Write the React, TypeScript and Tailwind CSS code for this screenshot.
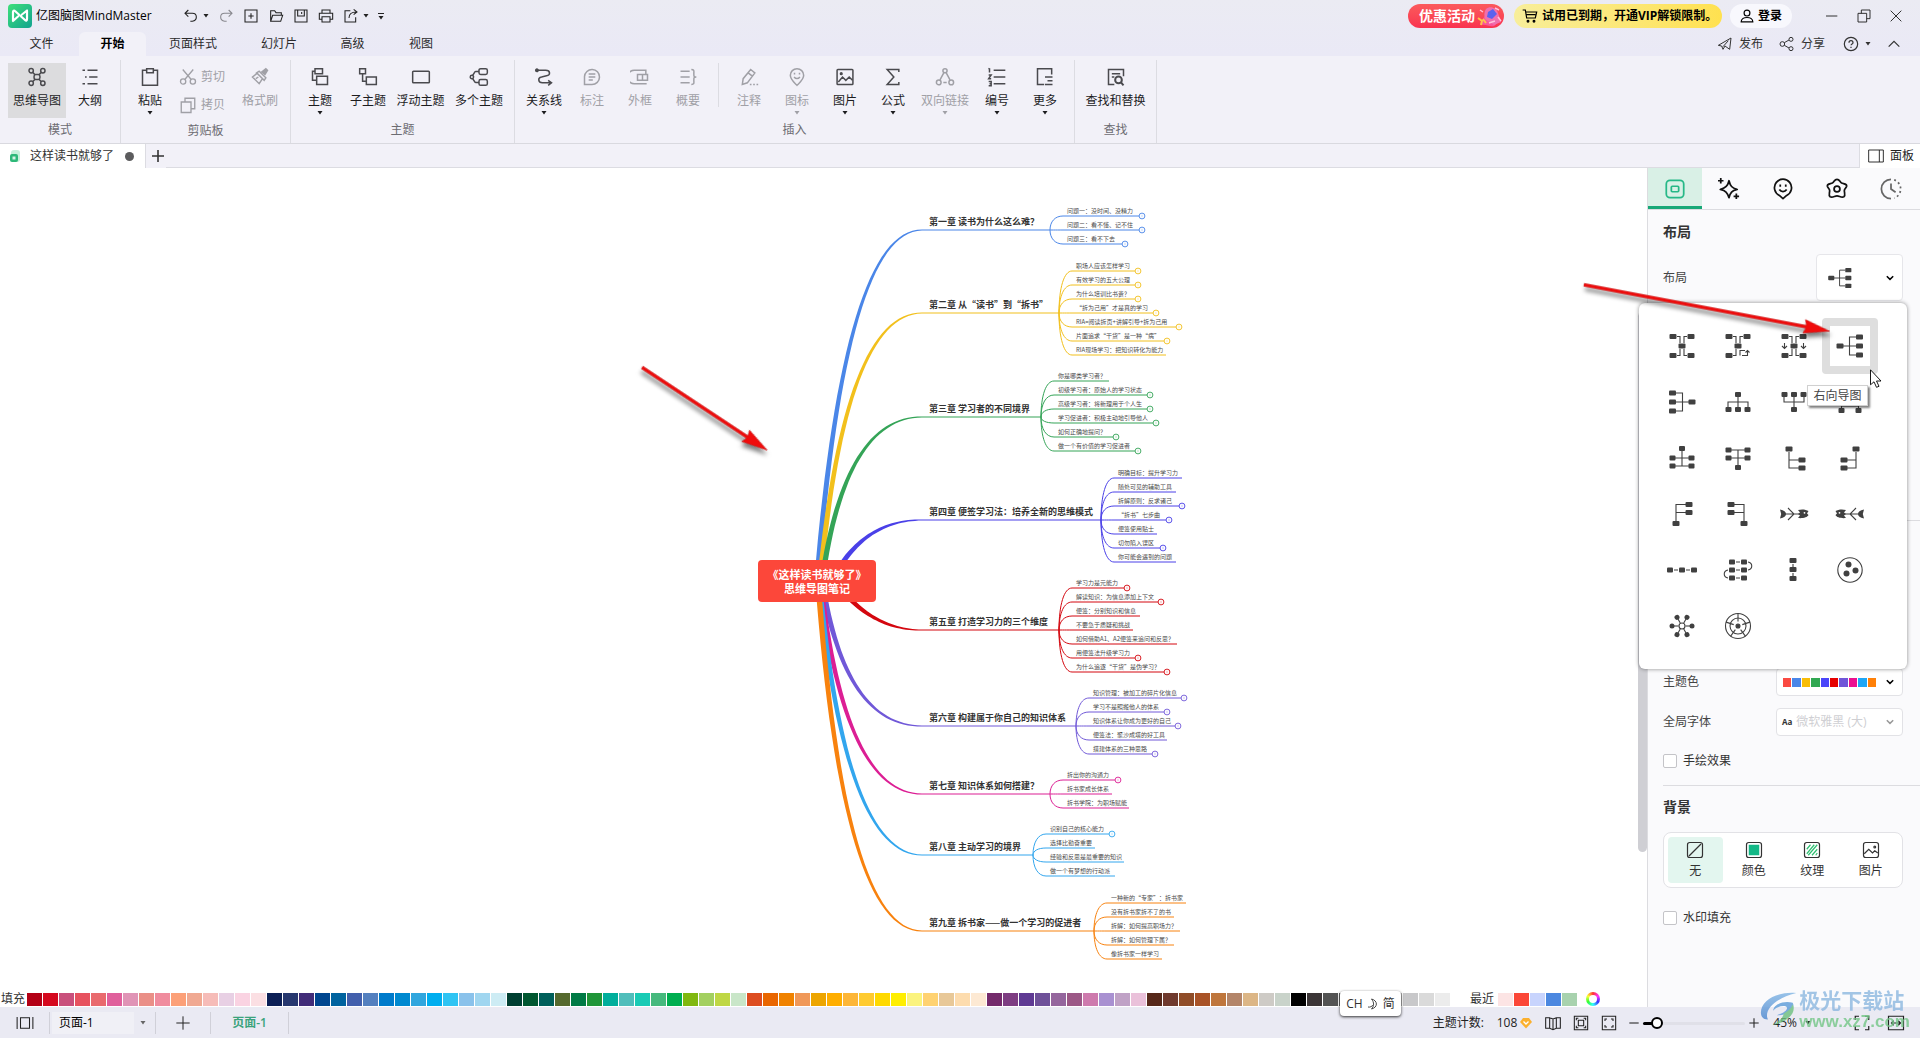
import React, { useState } from 'react';

type IconProps = { children: React.ReactNode; className?: string; sw?: number };

const Icon: React.FC<IconProps> = ({ children, className = 'size-5', sw = 1.6 }) => (
  <svg
    viewBox="0 0 24 24"
    className={`shrink-0 ${className}`}
    fill="none"
    stroke="currentColor"
    strokeWidth={sw}
    aria-hidden="true"
  >
    {children}
  </svg>
);

const Caret: React.FC<{ className?: string }> = ({ className = '' }) => (
  <svg viewBox="0 0 6 4" className={`h-1 w-1.5 shrink-0 ${className}`} fill="currentColor" aria-hidden="true">
    <path d="M.5 0h5L3 3.500z" />
  </svg>
);

const Chevron: React.FC<{ className?: string }> = ({ className = '' }) => (
  <svg
    viewBox="0 0 8 8"
    className={`size-2 shrink-0 ${className}`}
    fill="none"
    stroke="currentColor"
    strokeWidth={1.5}
    aria-hidden="true"
  >
    <path d="M.8 2.2 4 5.4l3.2-3.2" />
  </svg>
);

/* ---------- mind map ---------- */

type Leaf = { text: string; end: number; more?: boolean };
type Chapter = {
  title: string;
  color: string;
  y: number;
  end: number;
  leafY: number;
  root: [number, number];
  bend: number;
  leaves: Leaf[];
};

const chapters: Chapter[] = [
  {
    title: '第一章 读书为什么这么难？',
    color: '#4a86e8',
    y: 62,
    end: 1050,
    leafY: 48,
    root: [817, 413],
    bend: 845,
    leaves: [
      { text: '问题一：没时间、没精力', end: 1142, more: true },
      { text: '问题二：看不懂、记不住', end: 1142, more: true },
      { text: '问题三：看不下去', end: 1125, more: true },
    ],
  },
  {
    title: '第二章 从“读书”到“拆书”',
    color: '#f2c01c',
    y: 145,
    end: 1059,
    leafY: 103,
    root: [820, 413],
    bend: 845,
    leaves: [
      { text: '职场人应该怎样学习', end: 1138, more: true },
      { text: '有效学习的五大公理', end: 1138, more: true },
      { text: '为什么培训比书贵？', end: 1138, more: true },
      { text: '“拆为己用”才是真的学习', end: 1156, more: true },
      { text: 'RIA=阅读拆页+讲解引导+拆为己用', end: 1179, more: true },
      { text: '片面追求“干货”是一种“病”', end: 1167, more: true },
      { text: 'RIA现场学习：把知识转化为能力', end: 1166 },
    ],
  },
  {
    title: '第三章 学习者的不同境界',
    color: '#34a457',
    y: 249,
    end: 1041,
    leafY: 213,
    root: [822, 413],
    bend: 845,
    leaves: [
      { text: '你是哪类学习者？', end: 1109 },
      { text: '初级学习者：原始人的学习状态', end: 1150, more: true },
      { text: '高级学习者：将新理用于个人生', end: 1150, more: true },
      { text: '学习促进者：积极主动地引导他人', end: 1156, more: true },
      { text: '如何正确地提问？', end: 1116, more: true },
      { text: '做一个有价值的学习促进者', end: 1138, more: true },
    ],
  },
  {
    title: '第四章 便签学习法：培养全新的思维模式',
    color: '#4a40e8',
    y: 352,
    end: 1101,
    leafY: 310,
    root: [835, 407],
    bend: 865,
    leaves: [
      { text: '明确目标：提升学习力', end: 1182 },
      { text: '随处可见的辅助工具', end: 1176 },
      { text: '拆解原则：反求诸己', end: 1182, more: true },
      { text: '“拆书”七步曲', end: 1169, more: true },
      { text: '便签使用贴士', end: 1157 },
      { text: '切勿陷入误区', end: 1163, more: true },
      { text: '你可能会遇到的问题', end: 1176 },
    ],
  },
  {
    title: '第五章 打造学习力的三个维度',
    color: '#d4070f',
    y: 462,
    end: 1059,
    leafY: 420,
    root: [835, 413],
    bend: 870,
    leaves: [
      { text: '学习力是元能力', end: 1127, more: true },
      { text: '解读知识：为信息添加上下文', end: 1161, more: true },
      { text: '便签：分别知识和信息', end: 1140 },
      { text: '不要急于质疑和挑战', end: 1133 },
      { text: '如何借助A1、A2便签来追问和反思？', end: 1177 },
      { text: '用便签法升级学习力', end: 1138, more: true },
      { text: '为什么追逐“干货”是伪学习？', end: 1167, more: true },
    ],
  },
  {
    title: '第六章 构建属于你自己的知识体系',
    color: '#7058d8',
    y: 558,
    end: 1076,
    leafY: 530,
    root: [822, 413],
    bend: 845,
    leaves: [
      { text: '知识管理：被加工的碎片化信息', end: 1184, more: true },
      { text: '学习不是照搬他人的体系', end: 1167, more: true },
      { text: '知识体系让你成为更好的自己', end: 1178, more: true },
      { text: '便签法：聚沙成塔的好工具', end: 1167 },
      { text: '搭建体系的三种思路', end: 1155, more: true },
    ],
  },
  {
    title: '第七章 知识体系如何搭建？',
    color: '#dc1e94',
    y: 626,
    end: 1050,
    leafY: 612,
    root: [820, 413],
    bend: 845,
    leaves: [
      { text: '拆出你的沟通力', end: 1118, more: true },
      { text: '拆书家成长体系', end: 1112 },
      { text: '拆书学院：为职场赋能', end: 1129 },
    ],
  },
  {
    title: '第八章 主动学习的境界',
    color: '#32a6ee',
    y: 687,
    end: 1033,
    leafY: 666,
    root: [819, 413],
    bend: 845,
    leaves: [
      { text: '识别自己的核心能力', end: 1112, more: true },
      { text: '选择比勤奋重要', end: 1095 },
      { text: '经验和反思是最重要的知识', end: 1124 },
      { text: '做一个有梦想的行动派', end: 1115 },
    ],
  },
  {
    title: '第九章 拆书家——做一个学习的促进者',
    color: '#f8820e',
    y: 763,
    end: 1094,
    leafY: 735,
    root: [818, 413],
    bend: 843,
    leaves: [
      { text: '一种新的“专家”：拆书家', end: 1186 },
      { text: '没有拆书家拆不了的书', end: 1174 },
      { text: '拆解：如何提高职场力？', end: 1180 },
      { text: '拆解：如何管理下属？', end: 1174 },
      { text: '像拆书家一样学习', end: 1162 },
    ],
  },
];

const BRANCH_X = 922;

// A quadratic curve drawn as an outline, thick at the root and thin at the chapter
const taper = (c: Chapter) => {
  const [x0, y0] = c.root;
  const left: string[] = [];
  const right: string[] = [];
  for (let i = 0; i <= 32; i++) {
    const t = i / 32;
    const u = 1 - t;
    const x = u * u * x0 + 2 * u * t * c.bend + t * t * BRANCH_X;
    const y = u * u * y0 + (1 - u * u) * c.y;
    const dx = 2 * u * (c.bend - x0) + 2 * t * (BRANCH_X - c.bend);
    const dy = 2 * u * (c.y - y0);
    const len = Math.hypot(dx, dy) || 1;
    const w = (5.6 * u + t) / 2;
    left.push(`${(x - (dy / len) * w).toFixed(1)},${(y + (dx / len) * w).toFixed(1)}`);
    right.unshift(`${(x + (dy / len) * w).toFixed(1)},${(y - (dx / len) * w).toFixed(1)}`);
  }
  return [...left, ...right].join(' ');
};

const MindMap: React.FC = () => (
  <div className="absolute inset-0 overflow-hidden font-['Noto_Sans_CJK_SC',sans-serif]">
    <svg className="absolute inset-0 h-full w-full" fill="none" aria-hidden="true">
      {chapters.map((c) => (
        <g key={c.title} stroke={c.color}>
          <polygon points={taper(c)} fill={c.color} stroke="none" />
          <path d={`M${BRANCH_X} ${c.y}H${c.end}`} strokeWidth={1.2} />
          {c.leaves.map((leaf, i) => {
            const y = c.leafY + i * 14;
            const lineEnd = leaf.more ? leaf.end - 3 : leaf.end;
            return (
              <g key={leaf.text}>
                <path
                  d={`M${c.end} ${c.y}C${c.end} ${c.y + (y - c.y) * 0.6} ${c.end + 5} ${y} ${c.end + 13} ${y}H${lineEnd}`}
                  strokeWidth={1}
                />
                {leaf.more && (
                  <>
                    <circle cx={leaf.end} cy={y} r={2.9} fill="#fff" strokeWidth={0.9} />
                    <path d={`M${leaf.end} ${y - 1.2}v2.4`} strokeWidth={0.7} opacity={0.5} />
                  </>
                )}
              </g>
            );
          })}
        </g>
      ))}
    </svg>

    <div className="absolute left-[758px] top-[392px] flex h-[42px] w-[118px] flex-col items-center justify-center rounded-sm bg-[#fc473a] text-[11px] leading-[14px] font-bold whitespace-nowrap text-white">
      <span>《这样读书就够了》</span>
      <span>思维导图笔记</span>
    </div>

    {chapters.map((c) => (
      <React.Fragment key={c.title}>
        <span
          className="absolute text-[9px] leading-3 font-bold whitespace-nowrap text-[#333]"
          style={{ left: 929, top: c.y - 14 }}
        >
          {c.title}
        </span>
        {c.leaves.map((leaf, i) => (
          <span
            key={leaf.text}
            className="absolute text-[6px] leading-2 whitespace-nowrap text-[#4a4a4a]"
            style={{ left: c.end + 17, top: c.leafY + i * 14 - 9 }}
          >
            {leaf.text}
          </span>
        ))}
      </React.Fragment>
    ))}
  </div>
);

const RedArrow: React.FC<{ className: string; length: number; angle: number; y: number }> = ({
  className,
  length,
  angle,
  y,
}) => (
  <svg className={`pointer-events-none absolute overflow-visible ${className}`} aria-hidden="true">
    <g transform={`rotate(${angle} 2 ${y})`} className="drop-shadow-[2px_4px_2px_rgba(0,0,0,0.5)]">
      <path
        d={`M1 ${y - 1.4}H${length - 24}l-2-5.5L${length} ${y}l-26 6.8 2-5.4H1z`}
        fill="#f00c0c"
        stroke="#c41414"
        strokeWidth={0.5}
      />
    </g>
  </svg>
);

/* ---------- ribbon ---------- */

type Tool = {
  label: string;
  icon: React.ReactNode;
  width?: string;
  menu?: boolean;
  disabled?: boolean;
  active?: boolean;
};

const ToolButton: React.FC<{ tool: Tool }> = ({ tool }) => (
  <button
    type="button"
    disabled={tool.disabled}
    className={`flex h-[55px] flex-col items-center pt-1 ${tool.width ?? 'w-12'} ${
      tool.active ? 'bg-[#dcdcde]' : ''
    } ${tool.disabled ? 'text-[#a0a0a6]' : 'text-[#1c1c1e]'}`}
  >
    <Icon className={`size-5 ${tool.disabled ? '' : 'text-[#4a4a4e]'}`} sw={1.8}>
      {tool.icon}
    </Icon>
    <span className="mt-1.5 leading-4 whitespace-nowrap">{tool.label}</span>
    {tool.menu && <Caret className="mt-0.5" />}
  </button>
);

const Group: React.FC<{ label: string; className: string; inset: string; children: React.ReactNode }> = ({
  label,
  className,
  inset,
  children,
}) => (
  <section
    aria-label={label}
    className={`mt-1 flex flex-col border-r border-[#dcdce2] pt-[3px] ${className}`}
  >
    <div className={`flex ${inset}`}>{children}</div>
    <span className="mt-1 text-center leading-4 text-[#6c6c72]">{label}</span>
  </section>
);

const modeTools: Tool[] = [
  {
    label: '思维导图',
    width: 'w-[58px]',
    active: true,
    icon: (
      <>
        <circle cx="5" cy="4.5" r="2.6" />
        <circle cx="19" cy="4.5" r="2.6" />
        <circle cx="5" cy="19.5" r="2.6" />
        <circle cx="19" cy="19.5" r="2.6" />
        <rect x="8.5" y="9" width="7" height="6" rx="2" />
        <path d="m7 6.5 3 3M17 6.5l-3 3M7 17.5l3-3M17 17.5l-3-3" />
      </>
    ),
  },
  { label: '大纲', icon: <path d="M3 4h3M9 4h12M6 12h2M11 12h10M3 20h3M9 20h12" /> },
];

const topicTools: Tool[] = [
  {
    label: '主题',
    menu: true,
    icon: <path d="M6 2h9v6H6zM8 11h13v10H8zM6 5H3v11h5" />,
  },
  { label: '子主题', icon: <path d="M2 2h7v6H2zM10 12h12v9H10zM5.5 8v9H10" /> },
  { label: '浮动主题', width: 'w-[57px]', icon: <rect x="2" y="5" width="20" height="14" rx="1" /> },
  {
    label: '多个主题',
    width: 'w-[60px]',
    icon: (
      <>
        <rect x="12" y="2" width="10" height="7" rx="2" />
        <rect x="12" y="15" width="10" height="7" rx="2" />
        <circle cx="3.5" cy="12" r="2" />
        <path d="M12 5.5H8c-1.5 0-2 3-4 5M12 18.5H8c-1.5 0-2-3-4-5" />
      </>
    ),
  },
];

const insertTools: Tool[] = [
  {
    label: '关系线',
    menu: true,
    icon: (
      <>
        <path d="M4 4h10c6 0 6 6 1 6.5L9 12c-5 1-4 7 1 7h10M17 16l4 3-4 3" />
        <circle cx="3.5" cy="4" r="1.5" fill="currentColor" />
      </>
    ),
  },
  {
    label: '标注',
    disabled: true,
    icon: <path d="M3 21V11.5a9 9 0 1 1 9 9.5zM8 8.5h8M8 12h8M8 15.5h5" />,
  },
  {
    label: '外框',
    disabled: true,
    icon: <path d="M19 8V4H5a3 3 0 0 0 0 16h15M9 9h12v7H9zM15 9v7" />,
  },
  {
    label: '概要',
    disabled: true,
    icon: <path d="M3 5h11M3 12h11M3 19h11M16 3c4 0 3 2 3 5s0 4 3 4c-3 0-3 1-3 4s1 5-3 5" />,
  },
];

const richTools: Tool[] = [
  {
    label: '注释',
    disabled: true,
    icon: <path d="M14 3l5 4-9 12-6 2 1-7zM11 7l5 4M13 21h2M17 21h2M21 21h2" />,
  },
  {
    label: '图标',
    disabled: true,
    menu: true,
    icon: (
      <>
        <path d="M12 22c-4-4-8-7-8-12a8 8 0 0 1 16 0c0 5-4 8-8 12z" />
        <path d="M9 7v2M15 7v2M8.5 12c2 2.5 5 2.5 7 0" />
      </>
    ),
  },
  {
    label: '图片',
    menu: true,
    icon: (
      <>
        <rect x="2.5" y="3" width="19" height="18" rx="1" />
        <path d="m4 18 5-6 4 4 4-4 4 4" />
        <circle cx="7.5" cy="8" r="1" />
      </>
    ),
  },
  { label: '公式', menu: true, icon: <path d="M19 6V3H5l8 9-8 9h14v-3" /> },
  {
    label: '双向链接',
    width: 'w-14',
    disabled: true,
    menu: true,
    icon: (
      <>
        <circle cx="12" cy="4.5" r="2.5" />
        <circle cx="4.5" cy="18.5" r="2.8" />
        <circle cx="19.5" cy="18.5" r="2.8" />
        <path d="m10.500 7-4.500 8.500M13.500 7l4.500 8.500M10 18.500h4" />
      </>
    ),
  },
  {
    label: '编号',
    menu: true,
    icon: <path d="M8 4h14M8 12h14M8 20h14M3 1.5v5M2 3l1-1.5M2 9.5h3l-3 4.500h3M2 17.5h3v5H2M3 20h2" />,
  },
  {
    label: '更多',
    menu: true,
    icon: <path d="M20 9V2H3v19h8M12 12h9M15 16.5h6M12 21h9" />,
  },
];

const quickActions: { name: string; icon: React.ReactNode; menu?: boolean; muted?: boolean }[] = [
  { name: '撤销', menu: true, icon: <path d="M8 3 3 8l5 5M3 8h11c8 0 8 11 0 12h-3" /> },
  { name: '重做', muted: true, icon: <path d="m16 3 5 5-5 5M21 8H10c-8 0-8 11 0 12h3" /> },
  { name: '新建', icon: <path d="M3 3h18v18H3zM12 8v8M8 12h8" /> },
  { name: '打开', icon: <path d="M4 20V4h6l2 3h8v4M4 20h15l3-9H7z" /> },
  { name: '保存', icon: <path d="M3 3h18v18H3zM7 3v9h10V3M13 6v3" /> },
  { name: '打印', icon: <path d="M6 8V3h12v5M6 17H2V8h20v9h-4M6 13h12v8H6z" /> },
  { name: '导出', menu: true, icon: <path d="M11 4H3v17h16v-7M9 15c0-6 4-9 11-9M16 2l5 4-5 4" /> },
];

const Ribbon: React.FC = () => (
  <div className="flex h-[88px] border-b border-[#d9d9df] bg-[#f2f1f8]">
    <Group label="模式" className="w-[121px]" inset="pl-2">
      {modeTools.map((t) => (
        <ToolButton key={t.label} tool={t} />
      ))}
    </Group>
    <Group label="剪贴板" className="w-[170px]" inset="pl-[5px]">
      <ToolButton
        tool={{
          label: '粘贴',
          menu: true,
          icon: <path d="M8 4H3v18h18V4h-5M8 2h8v5H8z" />,
        }}
      />
      <div className="flex w-[62px] flex-col pl-[5px] text-[#a0a0a6]">
        <button type="button" disabled className="flex h-7 items-center gap-1">
          <Icon className="size-[18px]" sw={1.8}>
            <circle cx="5.5" cy="18" r="3.5" />
            <circle cx="18.5" cy="18" r="3.5" />
            <path d="M5 2l11 13M19 2 8 15" />
          </Icon>
          剪切
        </button>
        <button type="button" disabled className="flex h-7 items-center gap-1">
          <Icon className="size-[18px]" sw={1.8}>
            <path d="M3 8h13v14H3zM8 8V3h13v14h-5" />
          </Icon>
          拷贝
        </button>
      </div>
      <ToolButton
        tool={{
          label: '格式刷',
          disabled: true,
          icon: (
            <>
              <path d="M14 6l5-4 2 2-3 5z" fill="currentColor" />
              <path d="M11 5l8 8-2 3L8 7zM8 8l-5 4 8 8 4-6M7 14l3-2" />
            </>
          ),
        }}
      />
    </Group>
    <Group label="主题" className="w-[224px]" inset="pl-[5px]">
      {topicTools.map((t) => (
        <ToolButton key={t.label} tool={t} />
      ))}
    </Group>
    <Group label="插入" className="w-[560px]" inset="pl-[5px]">
      {insertTools.map((t) => (
        <ToolButton key={t.label} tool={t} />
      ))}
      <div className="mx-1.5 h-11 w-px bg-[#dcdce2]" />
      {richTools.map((t) => (
        <ToolButton key={t.label} tool={t} />
      ))}
    </Group>
    <Group label="查找" className="w-[82px]" inset="pl-2">
      <ToolButton
        tool={{
          label: '查找和替换',
          width: 'w-[65px]',
          icon: (
            <>
              <path d="M10 21H3V3h18v8M7 8h10M7 12h3" />
              <circle cx="15" cy="15.5" r="4" strokeWidth={2.4} />
              <path d="m18 18.500 3 3.500" strokeWidth={2.4} />
            </>
          ),
        }}
      />
    </Group>
  </div>
);

/* ---------- header ---------- */

const menus = [
  { label: '文件', width: 'w-[75px]' },
  { label: '开始', width: 'w-[67px]' },
  { label: '页面样式', width: 'w-[94px]' },
  { label: '幻灯片', width: 'w-[78px]' },
  { label: '高级', width: 'w-[69px]' },
  { label: '视图', width: 'w-[68px]' },
];

const Header: React.FC = () => {
  const [tab, setTab] = useState('开始');

  return (
    <header className="bg-gradient-to-b from-[#ebebf3] to-[#eae9f6]">
      <div className="flex h-8 items-center pl-2 text-[#222]">
        <svg viewBox="0 0 24 24" className="size-6" aria-hidden="true">
          <defs>
            <linearGradient id="logo" x1="0" y1="0" x2="1" y2="1">
              <stop offset="0" stopColor="#3fe07a" />
              <stop offset="1" stopColor="#12a38f" />
            </linearGradient>
          </defs>
          <rect width="24" height="24" rx="4" fill="url(#logo)" />
          <path
            d="M5 17V8c0-1 1-2 2-1l10 9c1 1 2 1 2-1V7M5 17l5-4.500M14 10.500 19 6.500"
            fill="none"
            stroke="#fff"
            strokeWidth="2.2"
            strokeLinecap="round"
            strokeLinejoin="round"
          />
        </svg>
        <h1 className="ml-1 w-[147px] text-black">亿图脑图MindMaster</h1>
        <div className="flex items-center gap-[9px]">
          {quickActions.map((a) => (
            <button
              key={a.name}
              type="button"
              aria-label={a.name}
              className={`flex items-center gap-1 ${a.muted ? 'text-[#88888e]' : ''}`}
            >
              <Icon className="size-4">{a.icon}</Icon>
              {a.menu && <Caret />}
            </button>
          ))}
          <button type="button" aria-label="自定义快速访问工具栏" className="flex flex-col items-center gap-0.5">
            <span className="h-px w-1.5 bg-current" />
            <Caret />
          </button>
        </div>
        <div className="ml-auto flex items-center">
          <button
            type="button"
            className="flex h-6 w-24 items-center rounded-full bg-gradient-to-b from-[#fb5a5c] to-[#f93250] pl-[11px] text-sm font-bold text-white"
          >
            优惠活动
            <svg viewBox="0 0 26 24" className="ml-0.5 h-6 w-[26px]" aria-hidden="true">
              <path d="M3 21c1-5 4-8 8-12l9 3c2 4 0 8-3 10-5 1-7-2-14-1z" fill="#f8559a" />
              <path d="M9 5c4-4 11-1 12 4l3 9-7 3-9-6c-1-4-1-7 1-10z" fill="#f06fae" />
              <path d="M11 8l5-3 4 5-5 5-5-2z" fill="#5a62ee" />
              <path d="M1 14l4 3-1 4M6 15l3 4" stroke="#ffc24a" strokeWidth="2" fill="none" />
              <path d="M3 6l3 2M18 4l4 2M21 13l3 4M12 19l6-2" stroke="#ffc2dc" strokeWidth="1.5" fill="none" />
            </svg>
          </button>
          <button
            type="button"
            className="ml-2.5 flex h-6 w-[208px] items-center gap-1 rounded-full bg-gradient-to-r from-[#f8ee9a] to-[#ffe14f] pl-2 font-bold whitespace-nowrap text-black"
          >
            <Icon className="size-4" sw={1.8}>
              <path d="M1 3h4l2 12h13l2-9H6M20 10H7" />
              <circle cx="9" cy="20" r="1.3" fill="currentColor" />
              <circle cx="18" cy="20" r="1.3" fill="currentColor" />
            </Icon>
            试用已到期，开通VIP解锁限制。
          </button>
          <button
            type="button"
            className="ml-2 flex h-6 w-[62px] items-center gap-1 rounded-full bg-[#f8f8fd] pl-2.5 font-bold text-black"
          >
            <Icon className="size-3.5" sw={2}>
              <circle cx="12" cy="7" r="5" />
              <path d="M2 22c0-10 20-10 20 0z" />
            </Icon>
            登录
          </button>
          <div className="mr-4 ml-8 flex items-center gap-4">
            <button type="button" aria-label="最小化">
              <Icon className="size-4" sw={1.4}>
                <path d="M3 12h17" />
              </Icon>
            </button>
            <button type="button" aria-label="还原">
              <Icon className="size-4" sw={1.4}>
                <path d="M3 8h13v13H3zM8 8V3h13v13h-5" />
              </Icon>
            </button>
            <button type="button" aria-label="关闭">
              <Icon className="size-4" sw={1.4}>
                <path d="m4 4 16 16M20 4 4 20" />
              </Icon>
            </button>
          </div>
        </div>
      </div>

      <div className="flex h-6 items-stretch pl-1">
        <nav className="flex" role="tablist">
          {menus.map((m) => (
            <button
              key={m.label}
              type="button"
              role="tab"
              aria-selected={tab === m.label}
              onClick={() => setTab(m.label)}
              className={`${m.width} ${
                tab === m.label ? 'rounded-t-md bg-[#f2f1f8] font-bold text-black' : 'text-[#2a2a2c]'
              }`}
            >
              {m.label}
            </button>
          ))}
        </nav>
        <div className="mr-[18px] ml-auto flex items-center text-[#333]">
          <button type="button" className="flex items-center gap-1.5">
            <Icon className="size-4" sw={1.5}>
              <path d="M2 14 21 3l-2 17-7-5-3 5-2-5zM9 16l8-9" />
            </Icon>
            发布
          </button>
          <button type="button" className="ml-4 flex items-center gap-1.5">
            <Icon className="size-4" sw={1.5}>
              <circle cx="5" cy="12" r="3.5" />
              <circle cx="18" cy="5" r="3" />
              <circle cx="18" cy="19" r="3" />
              <path d="m8 10 7-4M8 14l7 4" />
            </Icon>
            分享
          </button>
          <button type="button" aria-label="帮助" className="ml-[18px] flex items-center gap-1.5">
            <Icon className="size-4" sw={1.8}>
              <circle cx="12" cy="12" r="10" />
              <path d="M9 10c0-4 6-4 6 0 0 2-3 2-3 4M12 16v2" />
            </Icon>
            <Caret />
          </button>
          <button type="button" aria-label="折叠功能区" className="ml-[15px]">
            <Icon className="size-4" sw={1.8}>
              <path d="m4 16 8-8 8 8" />
            </Icon>
          </button>
        </div>
      </div>
    </header>
  );
};

const DocumentTabs: React.FC = () => (
  <div className="flex h-6 bg-[#f2f1f8] text-[#333]">
    <div className="flex w-[146px] items-center border-r border-[#dcdce2] bg-white pl-[9px]">
      <svg viewBox="0 0 12 14" className="h-3.5 w-3" aria-hidden="true">
        <rect x="2" y="1" width="9" height="12" rx="3" fill="#c6f0da" />
        <rect x="1" y="5" width="8" height="8" rx="2" fill="#2db878" />
        <rect x="3.5" y="7.5" width="3" height="3" fill="#fff" opacity=".8" />
      </svg>
      <span className="ml-[9px] whitespace-nowrap">这样读书就够了</span>
      <span className="ml-[11px] size-[9px] rounded-full bg-[#5c5c5e]" />
    </div>
    <button type="button" aria-label="新建文档" className="pl-1">
      <Icon className="size-4" sw={2.4}>
        <path d="M12 3v18M3 12h18" />
      </Icon>
    </button>
    <div className="flex-1 border-b border-[#dcdce2]" />
    <button
      type="button"
      className="flex w-[61px] items-center gap-1.5 border-l border-[#dcdce2] bg-white pl-2 text-[#222]"
    >
      <Icon className="size-4" sw={1.4}>
        <path d="M1 3h22v18H1zM17 3v18" />
      </Icon>
      面板
    </button>
  </div>
);

/* ---------- layout picker ---------- */

const Box: React.FC<{ at: [number, number][]; w?: number }> = ({ at, w = 7 }) => (
  <>
    {at.map(([x, y]) => (
      <rect
        key={`${x},${y}`}
        x={x - w / 2}
        y={y - 2.5}
        width={w}
        height={5}
        rx={1}
        fill="currentColor"
        stroke="none"
      />
    ))}
  </>
);

const corners: [number, number][] = [
  [-9, -9.5],
  [9, -9.5],
  [-9, 9.5],
  [9, 9.5],
  [0, 0],
];

const RightMap = () => (
  <>
    <Box at={[[-10, 0], [9.5, -9], [9.5, 0], [9.5, 9]]} />
    <path d="M-7 0H6M6-9H-.5V9H6" />
  </>
);

const Fish = () => (
  <>
    <path d="M-14-4.500c4 .5 6 2.500 6 4.500s-2 4-6 4.500l1.200-4.500z" fill="currentColor" stroke="none" />
    <path d="M-9 0H6M-6-6l6 6-6 6" />
    <path
      d="M4-4c4-1 8-.5 10.500 1l-1.500 2.500 1.500 1.500c-1 2.500-6 3.500-10.500 3l2-2.500L4 0l2-1.500z"
      fill="currentColor"
      stroke="none"
    />
    <circle cx="10.5" cy="-1.2" r=".9" fill="#fff" stroke="none" />
  </>
);

const layouts: { name: string; icon: React.ReactNode }[] = [
  {
    name: '双向导图',
    icon: (
      <>
        <Box at={corners} />
        <path d="M-5-9.5h3V-3M5-9.5H2V-3M-5 9.5h3V3M5 9.5H2V3" />
      </>
    ),
  },
  {
    name: '双向导图(逆时针)',
    icon: (
      <>
        <Box at={corners.filter(([x, y]) => x < 9 || y < 0)} />
        <path d="M-5-9.5h3V-3M5-9.5H2V-3M-5 9.5h3V3M7 4.500H2v5M4 9.500h5.500V5M7.500 6.500l2-2 2 2" />
      </>
    ),
  },
  {
    name: '双向导图(顺时针)',
    icon: (
      <>
        <Box at={corners} />
        <path d="M-5-9.5h3V-3M5-9.5H2V-3M-5 9.5h3V3M5 9.5H2V3M-9.500-3v5M-12 0l2.500 2.500L-7 0M9.500-3v5M7 0l2.500 2.500L12 0" />
      </>
    ),
  },
  { name: '右向导图', icon: <RightMap /> },
  {
    name: '左向导图',
    icon: (
      <g transform="scale(-1 1)">
        <RightMap />
      </g>
    ),
  },
  {
    name: '向下组织图',
    icon: (
      <>
        <Box w={6} at={[[0, -7.5], [-9.5, 7.5], [0, 7.5], [9.5, 7.5]]} />
        <path d="M0-5V5M-10 5V0h20v5" />
      </>
    ),
  },
  {
    name: '向上组织图',
    icon: (
      <>
        <Box w={6} at={[[0, 7.5], [-9.5, -7.5], [0, -7.5], [9.5, -7.5]]} />
        <path d="M0-5V5M-10-5V0h20v-5" />
      </>
    ),
  },
  {
    name: '组织图',
    icon: (
      <>
        <Box w={6} at={[[0, -7.5], [-8.5, 8.5], [8.5, 8.5]]} />
        <path d="M0-5v9M-8.500 6V4h17v2" />
      </>
    ),
  },
  {
    name: '向下树状图',
    icon: (
      <>
        <Box w={6} at={[[0, -9.5], [-9.5, 0], [9.5, 0], [-9.5, 8], [9.5, 8]]} />
        <path d="M0-7V8M-7 0H7M-7 8H7" />
      </>
    ),
  },
  {
    name: '向上树状图',
    icon: (
      <>
        <Box w={6} at={[[0, 9.5], [-9.5, 0], [9.5, 0], [-9.5, -8], [9.5, -8]]} />
        <path d="M0 7V-8M-7 0H7M-7-8H7" />
      </>
    ),
  },
  {
    name: '右下树状图',
    icon: (
      <>
        <Box at={[[-5, -9], [8, 2], [8, 10]]} />
        <path d="M-5-6V10H5M-5 2H5" />
      </>
    ),
  },
  {
    name: '左下树状图',
    icon: (
      <>
        <Box at={[[6, -9], [-6, 2], [-6, 10]]} />
        <path d="M6-6V10H-3M6 2H-3" />
      </>
    ),
  },
  {
    name: '右上树状图',
    icon: (
      <>
        <Box at={[[-6, 9.5], [7, -9.5], [7, -1.5]]} />
        <path d="M-6 7V-9.5H4M-6-1.5H4" />
      </>
    ),
  },
  {
    name: '左上树状图',
    icon: (
      <>
        <Box at={[[6, 9.5], [-7, -9.5], [-7, -1.5]]} />
        <path d="M6 7V-9.5H-4M6-1.5H-4" />
      </>
    ),
  },
  { name: '右向鱼骨图', icon: <Fish /> },
  {
    name: '左向鱼骨图',
    icon: (
      <g transform="scale(-1 1)">
        <Fish />
      </g>
    ),
  },
  {
    name: '水平时间轴',
    icon: (
      <>
        <Box w={6} at={[[-12, 0], [0, 0], [12, 0]]} />
        <path d="M-8 0h4M4 0h4" />
      </>
    ),
  },
  {
    name: 'S型时间轴',
    icon: (
      <>
        <Box w={6} at={[[-6, -8], [6, -8], [-6, 0], [6, 0], [-6, 8], [6, 8]]} />
        <path d="M-2-8h4M-2 0h4M-2 8h4M10-8c5 1 5 7 0 8M-10 0c-5 1-5 7 0 8" />
      </>
    ),
  },
  {
    name: '垂直时间轴',
    icon: (
      <>
        <Box at={[[-1, -9.5], [-1, -0.5], [-1, 8.5]]} />
        <path d="M-1-6v3M-1 3v3" />
      </>
    ),
  },
  {
    name: '气泡图',
    icon: (
      <>
        <circle r="12.2" />
        <circle cx="-1.5" cy="-5.5" r="3" fill="currentColor" stroke="none" />
        <circle cx="5.5" cy=".5" r="3" fill="currentColor" stroke="none" />
        <circle cx="-3.5" cy="3.5" r="3" fill="currentColor" stroke="none" />
      </>
    ),
  },
  {
    name: '辐射图',
    icon: (
      <>
        <circle r="3" />
        {[0, 60, 120, 180, 240, 300].map((a) => (
          <g key={a} transform={`rotate(${a})`}>
            <circle cx="10" r="2.5" fill="currentColor" stroke="none" />
            <path d="M3.500 0H8" />
          </g>
        ))}
      </>
    ),
  },
  {
    name: '扇形图',
    icon: (
      <>
        <circle r="12.5" />
        <circle r="8" />
        <circle r="2" fill="currentColor" />
        {[-90, -18, 54, 126, 198].map((a) => (
          <path key={a} d="M4.500 0h8" transform={`rotate(${a})`} />
        ))}
      </>
    ),
  },
];

const LayoutIcon: React.FC<{ children: React.ReactNode; className?: string }> = ({
  children,
  className = 'size-8',
}) => (
  <svg
    viewBox="-16 -16 32 32"
    className={`shrink-0 text-[#404040] ${className}`}
    fill="none"
    stroke="currentColor"
    strokeWidth={1.1}
    aria-hidden="true"
  >
    {children}
  </svg>
);

const LayoutPicker: React.FC = () => {
  const [selected, setSelected] = useState('右向导图');
  const current = layouts.find((l) => l.name === selected) ?? layouts[3];

  return (
    <div className="relative">
      <button
        type="button"
        aria-haspopup="listbox"
        aria-labelledby="layout-label"
        className="flex h-[47px] w-[87px] items-center justify-between rounded border border-[#e6e6ea] bg-white pr-2 pl-[9px]"
      >
        <LayoutIcon className="size-7">{current.icon}</LayoutIcon>
        <Chevron />
      </button>
      <div
        role="listbox"
        className="absolute top-full -right-1 z-10 mt-0.5 grid w-[268px] grid-cols-[repeat(4,56px)] rounded-md bg-white p-[15px] shadow-[0_0_4px_rgba(0,0,0,0.45)]"
      >
        {layouts.map((l) => (
          <button
            key={l.name}
            type="button"
            role="option"
            aria-selected={l.name === selected}
            aria-label={l.name}
            onClick={() => setSelected(l.name)}
            className={`flex size-14 items-center justify-center ${
              l.name === selected ? 'rounded border-8 border-[#dedede]' : ''
            }`}
          >
            <LayoutIcon>{l.icon}</LayoutIcon>
          </button>
        ))}
        <span
          role="tooltip"
          className="absolute top-[82px] left-[168px] flex h-[21px] w-[61px] items-center justify-center border border-[#d0d0d0] bg-white text-[#444] shadow-[2px_2px_2px_rgba(0,0,0,0.5)]"
        >
          右向导图
        </span>
        <svg viewBox="0 0 12 19" className="absolute top-[66px] left-[231px] h-[19px] w-3" aria-hidden="true">
          <path d="M.5.8v15l3.500-3 2.500 5.500 2.500-1L6.500 12H11z" fill="#fff" stroke="#000" strokeWidth=".9" />
        </svg>
      </div>
    </div>
  );
};

/* ---------- side panel ---------- */

const themeColors = [
  '#fa4a42',
  '#4a86e8',
  '#f8bd08',
  '#32a852',
  '#4a45fa',
  '#e60000',
  '#7055d8',
  '#ec1090',
  '#1ea6f5',
  '#ff8008',
];

const panelTabs = [
  {
    name: '样式',
    icon: (
      <>
        <rect x="2.5" y="2.5" width="19" height="19" rx="4" />
        <rect x="8" y="9" width="8" height="6" rx="1" />
      </>
    ),
  },
  {
    name: 'AI',
    icon: (
      <>
        <path
          d="M12 3c1.500 6 3 7.500 9 9.500-6 1.500-7.500 3-9 9-2-6-3.500-7.500-9.500-9 6-2 8-3.500 9.500-9.500z"
          strokeLinejoin="round"
        />
        <path d="M3 0v6M0 3h6M20 17v6M17 20h6" />
      </>
    ),
  },
  {
    name: '图标',
    icon: (
      <>
        <path d="M12 22.500 8 19A9.300 9.300 0 1 1 16 19z" strokeLinejoin="round" />
        <path d="M9 7v2.500M15 7v2.500M8 12.500c2 3 6 3 8 0" />
      </>
    ),
  },
  {
    name: '剪贴画',
    icon: (
      <>
        <path
          d="M12 1.500c3 0 3 3 5 4s6 .5 5.500 3.500c-.5 2-2.500 3-2.500 5s1.500 5-.5 6.500c-2.500 1.500-5-1-7.500-1s-5 2.500-7.500 1C2.500 19 4 16 4 14s-2-3-2.500-5C1 6 5 6.500 7 5.500s2-4 5-4z"
          strokeLinejoin="round"
        />
        <circle cx="12" cy="12" r="3.2" />
      </>
    ),
  },
  {
    name: '历史',
    muted: true,
    icon: (
      <>
        <path d="M12 1.500a10.500 10.500 0 0 0 0 21M12 6v6l5 3.500" />
        <path d="M15.500 2.100a10.500 10.500 0 0 1 0 19.800" strokeDasharray="2 3" />
      </>
    ),
  },
];

const backgrounds = [
  {
    name: '无',
    icon: <path d="m4 20 16-16" />,
  },
  {
    name: '颜色',
    icon: <rect x="5" y="5" width="14" height="14" fill="#12b886" stroke="none" />,
  },
  {
    name: '纹理',
    icon: (
      <g stroke="#2fbf71">
        <path d="m5 11 5-6M5 17 15 5M7 19 19 5M12 19l7-8M17 19l2-3" />
      </g>
    ),
  },
  {
    name: '图片',
    icon: (
      <>
        <path d="m3 17 6-6 5 5 3-3 4 3" />
        <circle cx="17" cy="8" r="1.2" />
      </>
    ),
  },
];

const CheckRow: React.FC<{ id: string; label: string; className?: string }> = ({
  id,
  label,
  className = '',
}) => (
  <div className={`flex items-center gap-1.5 ${className}`}>
    <input
      id={id}
      type="checkbox"
      className="size-3.5 appearance-none rounded-xs border border-[#c4c4c8] bg-white checked:bg-[#17b179]"
    />
    <label htmlFor={id} className="leading-4 text-[#333]">
      {label}
    </label>
  </div>
);

const SidePanel: React.FC = () => {
  const [background, setBackground] = useState('无');

  return (
    <aside className="flex w-[273px] shrink-0 flex-col border-l border-[#dcdce0] bg-[#fafafc]">
      <div className="grid h-[42px] shrink-0 grid-cols-[repeat(5,54px)] border-b border-[#dcdce0]">
        {panelTabs.map((t, i) => (
          <button
            key={t.name}
            type="button"
            aria-label={t.name}
            className={`flex items-center justify-center ${
              i === 0 ? 'border-b-3 border-[#17a877] bg-[#d9f0e6] pt-[3px] text-[#27b887]' : ''
            } ${t.muted ? 'text-[#666]' : 'text-[#111]'}`}
          >
            <Icon className={i === 0 ? 'size-[22px] text-[#27b887]' : 'size-[22px]'} sw={1.9}>
              {t.icon}
            </Icon>
          </button>
        ))}
      </div>
      <div className="flex flex-col pl-[15px]">
        <h2 className="mt-3 text-sm leading-5 font-bold text-[#333]">布局</h2>
        <div className="mt-3 flex h-[47px] items-center justify-between pr-[17px]">
          <span id="layout-label" className="text-[#444]">
            布局
          </span>
          <LayoutPicker />
        </div>
        <hr className="mt-[219px] border-[#dcdce0]" />
        <div className="mt-[147px] flex h-7 items-center justify-between pr-[17px]">
          <span id="theme-label" className="text-[#444]">
            主题色
          </span>
          <button
            type="button"
            aria-labelledby="theme-label"
            className="flex h-7 w-[127px] items-center justify-between rounded border border-[#e2e2e6] bg-white pr-2 pl-1.5"
          >
            <span className="flex w-[93px] gap-px">
              {themeColors.map((color) => (
                <span key={color} className="h-[9px] flex-1" style={{ backgroundColor: color }} />
              ))}
            </span>
            <Chevron />
          </button>
        </div>
        <div className="mt-3 flex h-7 items-center justify-between pr-[17px]">
          <label htmlFor="global-font" className="text-[#444]">
            全局字体
          </label>
          <div className="relative flex h-7 w-[127px] items-center rounded border border-[#e2e2e6] bg-white pl-[5px]">
            <span className="text-[8px] font-bold text-[#333]">Aa</span>
            <select
              id="global-font"
              disabled
              className="ml-1 h-full flex-1 appearance-none bg-transparent text-[#cfcfd3] opacity-100"
            >
              <option>微软雅黑 (大)</option>
            </select>
            <Chevron className="absolute right-2 text-[#999]" />
          </div>
        </div>
        <CheckRow id="hand-drawn" label="手绘效果" className="mt-[17px]" />
        <hr className="mt-4 border-[#dcdce0]" />
        <h2 className="mt-[11px] text-sm leading-5 font-bold text-[#333]">背景</h2>
        <div className="mt-[15px] mr-[17px] grid h-14 grid-cols-4 gap-1 rounded-lg border border-[#e2e2e6] bg-white p-1">
          {backgrounds.map((b) => (
            <button
              key={b.name}
              type="button"
              aria-pressed={background === b.name}
              onClick={() => setBackground(b.name)}
              className={`flex flex-col items-center justify-center rounded text-[#333] ${
                background === b.name ? 'bg-[#e3f6ef]' : ''
              }`}
            >
              <Icon className="size-[18px]" sw={1.6}>
                <rect x="2" y="2" width="20" height="20" rx="3" />
                {b.icon}
              </Icon>
              <span className="mt-1 leading-4">{b.name}</span>
            </button>
          ))}
        </div>
        <CheckRow id="watermark-fill" label="水印填充" className="mt-[22px]" />
      </div>
    </aside>
  );
};

/* ---------- palette and status bar ---------- */

const palette = [
  '#b30015', '#d5081e', '#c9507c', '#e7525f', '#e96a6e', '#e0609c', '#e094b6', '#ea8f87',
  '#f08c9e', '#fca078', '#f0a992', '#f6bcb8', '#e8d0e4', '#fad3e2', '#fbdfe3', '#0c1f55',
  '#27386f', '#412c78', '#00468f', '#00639f', '#425fac', '#5480bf', '#007bcb', '#0089d0',
  '#30a6de', '#00aeef', '#2fc4f3', '#8ac2eb', '#a0d6f0', '#cdecf4', '#003f31', '#005730',
  '#005f5a', '#55692e', '#007a45', '#1f9538', '#00ae9b', '#50bebb', '#19cbb5', '#46b97d',
  '#00ae50', '#80b810', '#a3d060', '#bfd744', '#c9e6c8', '#dd4d20', '#e96600', '#f08200',
  '#f09858', '#eda500', '#ffae00', '#fdb637', '#ffcb30', '#ffd900', '#ffee00', '#fbf37e',
  '#ffd271', '#e8c898', '#fddcae', '#fde9d3', '#742a6b', '#7e3d82', '#5f3a93', '#6f5199',
  '#95669d', '#9c5886', '#ce7aad', '#a991d1', '#c0a2c6', '#eac1da', '#57281a', '#703a2e',
  '#904d28', '#a95327', '#bf763c', '#b38569', '#dcb686', '#cecbc6', '#c9d3ca', '#000000',
  '#3b3536', '#535353', '#6a6a6a', '#848484', '#9c9c9c', '#b2b2b2', '#c8c8ca', '#dadada',
  '#ececec',
];

const recent = ['#fce4e4', '#fb4737', '#c8d4fd', '#4c88e0', '#a8d2ae'];

const Swatches: React.FC<{ colors: string[] }> = ({ colors }) => (
  <div className="flex gap-px">
    {colors.map((color) => (
      <button
        key={color}
        type="button"
        aria-label={color}
        className="h-[13px] w-[15px]"
        style={{ backgroundColor: color }}
      />
    ))}
  </div>
);

const Palette: React.FC = () => (
  <div className="flex h-4 items-center bg-white pl-px text-[#333]">
    <span className="w-[26px] leading-4">填充</span>
    <Swatches colors={palette} />
    <span className="ml-5 w-7 leading-4">最近</span>
    <Swatches colors={recent} />
    <button
      type="button"
      aria-label="更多颜色"
      className="ml-[9px] flex size-3.5 items-center justify-center rounded-full bg-[conic-gradient(#f33,#f3f,#33f,#3ff,#3f3,#ff3,#f33)]"
    >
      <span className="size-2 rounded-full bg-white" />
    </button>
  </div>
);

const StatusBar: React.FC = () => {
  const [zoom, setZoom] = useState(45);

  return (
    <footer className="flex h-[31px] items-center bg-[#eaeaf3] pt-px text-[#222]">
      <button type="button" aria-label="页面列表" className="w-[49px] pl-4">
        <Icon className="size-[18px]" sw={1.4}>
          <path d="M1.500 4v16M22.500 4v16M6 5h12v14H6z" />
        </Icon>
      </button>
      <div className="relative flex h-[22px] w-[107px] items-center border-x border-[#d0d0d8] pl-0.5">
        <select aria-label="页面" className="h-full w-[82px] appearance-none bg-[#f0f0f6] pl-[7px] text-black">
          <option>页面-1</option>
        </select>
        <Caret className="absolute right-[9px] text-[#666]" />
      </div>
      <button
        type="button"
        aria-label="添加页面"
        className="flex h-[22px] w-[55px] items-center justify-center border-r border-[#d0d0d8]"
      >
        <Icon className="size-4" sw={1.5}>
          <path d="M12 2v20M2 12h20" />
        </Icon>
      </button>
      <button type="button" className="h-[22px] w-[78px] border-r border-[#d0d0d8] font-semibold text-[#3ba37c]">
        页面-1
      </button>

      <div className="ml-auto flex items-center">
        <span className="w-16">主题计数:</span>
        <span>108</span>
        <svg viewBox="0 0 12 12" className="ml-[3px] size-3" aria-hidden="true">
          <path d="M3 1h6l3 4-6 6.500L0 5z" fill="#fbb02e" />
          <path d="M3.500 4.500 6 7l2.500-2.500" stroke="#fff" strokeWidth="1.3" fill="none" />
        </svg>
        <button type="button" aria-label="大纲视图" className="ml-[13px]">
          <Icon className="size-4" sw={1.6}>
            <path d="M1 4h6v16H1zM7 4l5 2 5-2h6v16h-6l-5 2-5-2M12 6v16M17 4v16" />
          </Icon>
        </button>
        <button type="button" aria-label="适应页面" className="ml-3">
          <Icon className="size-4" sw={1.6}>
            <path d="M2 2h20v20H2zM8 8h8v8H8zM5 8V5h3M16 5h3v3M19 16v3h-3M8 19H5v-3" />
          </Icon>
        </button>
        <button type="button" aria-label="全屏" className="ml-3">
          <Icon className="size-4" sw={1.6}>
            <path d="M2 2h20v20H2zM6 9V6h3M15 6h3v3M18 15v3h-3M9 18H6v-3" />
          </Icon>
        </button>
        <button type="button" aria-label="缩小" className="ml-2.5" onClick={() => setZoom(zoom - 5)}>
          <Icon className="size-3.5" sw={1.8}>
            <path d="M4 12h16" />
          </Icon>
        </button>
        <input
          type="range"
          aria-label="缩放"
          min={10}
          max={400}
          value={zoom}
          onChange={(e) => setZoom(Number(e.target.value))}
          className="mx-0.5 h-[3px] w-[102px] appearance-none rounded bg-[linear-gradient(to_right,#000_10%,#e0e0e8_10%)] [&::-webkit-slider-thumb]:size-3 [&::-webkit-slider-thumb]:appearance-none [&::-webkit-slider-thumb]:rounded-full [&::-webkit-slider-thumb]:border-2 [&::-webkit-slider-thumb]:border-black [&::-webkit-slider-thumb]:bg-white"
        />
        <button type="button" aria-label="放大" onClick={() => setZoom(zoom + 5)}>
          <Icon className="size-3.5" sw={1.8}>
            <path d="M12 4v16M4 12h16" />
          </Icon>
        </button>
        <button type="button" className="ml-3 flex items-center gap-2">
          {zoom}%
          <Caret />
        </button>
        <button type="button" aria-label="全屏显示" className="ml-[42px]">
          <Icon className="size-[18px]" sw={1.6}>
            <path d="M8 3H3v5M16 3h5v5M21 16v5h-5M8 21H3v-5" />
          </Icon>
        </button>
        <button type="button" aria-label="适应宽度" className="mr-[15px] ml-4">
          <Icon className="size-[18px]" sw={1.6}>
            <path d="M2 3h20v18H2zM6 12h12M9 9l-3 3 3 3M15 9l3 3-3 3" />
          </Icon>
        </button>
      </div>
    </footer>
  );
};

const SiteMark: React.FC = () => (
  <div className="pointer-events-none absolute right-2.5 bottom-0.5 flex h-12 w-[150px] items-start opacity-80">
    <svg viewBox="0 0 42 38" className="mt-0.5 h-[38px] w-[42px]" aria-hidden="true">
      <defs>
        <linearGradient id="swirl" x1="0" y1="0" x2="0" y2="1">
          <stop offset="0" stopColor="#7fb4e4" />
          <stop offset="1" stopColor="#4a86cf" />
        </linearGradient>
      </defs>
      <path d="M41 1C20-1 1 9 1 23c0 5 3 8 8 8C4 21 16 7 41 1z" fill="url(#swirl)" />
      <path d="M37 12c-10-3-22 2-22 9 3-4 9-6 14-5 4 2 0 7-10 10 11 1 22-6 18-14z" fill="#5b9bd8" />
      <path d="M37 14c5 9-7 21-23 23 8-4 12-8 13-13 4-2 8-5 10-10z" fill="#6cc07e" />
    </svg>
    <div className="ml-0.5 flex flex-col whitespace-nowrap">
      <span className="text-[21px] leading-6 font-bold text-[#8db8e0]">极光下载站</span>
      <span className="font-['Liberation_Sans',sans-serif] text-[17px] leading-5 font-bold text-[#74c687]">
        www.xz7.com
      </span>
    </div>
  </div>
);

const App: React.FC = () => (
  <div className="relative flex h-screen flex-col overflow-hidden bg-white font-['Open_Sans','Noto_Sans_CJK_SC',sans-serif] text-xs">
    <Header />
    <Ribbon />
    <DocumentTabs />
    <div className="flex min-h-0 flex-1">
      <main className="flex min-w-0 flex-1 flex-col">
        <div className="relative min-h-0 flex-1">
          <MindMap />
          <RedArrow className="top-0 left-[641px] h-[300px] w-[140px]" length={151} angle={33.5} y={200} />
          <div className="absolute top-36 right-0 h-[540px] w-[9px] rounded-full bg-[#cfcfd4]" />
        </div>
        <Palette />
      </main>
      <SidePanel />
    </div>
    <StatusBar />

    <RedArrow className="top-0 right-[57px] z-20 h-[340px] w-[280px]" length={251} angle={10.7} y={285} />
    <div className="absolute right-[519px] bottom-[22px] flex h-[25px] w-[61px] items-center justify-center gap-1 rounded bg-white text-[#333] shadow-[0_1px_3px_rgba(0,0,0,0.8)]">
      CH
      <Icon className="size-3" sw={1.8}>
        <path d="M9 2c13 3 13 17 0 20 5-5 6-13 0-20zM2 18c4 1 8-1 11-5" />
      </Icon>
      简
    </div>
    <SiteMark />
  </div>
);

export default App;
